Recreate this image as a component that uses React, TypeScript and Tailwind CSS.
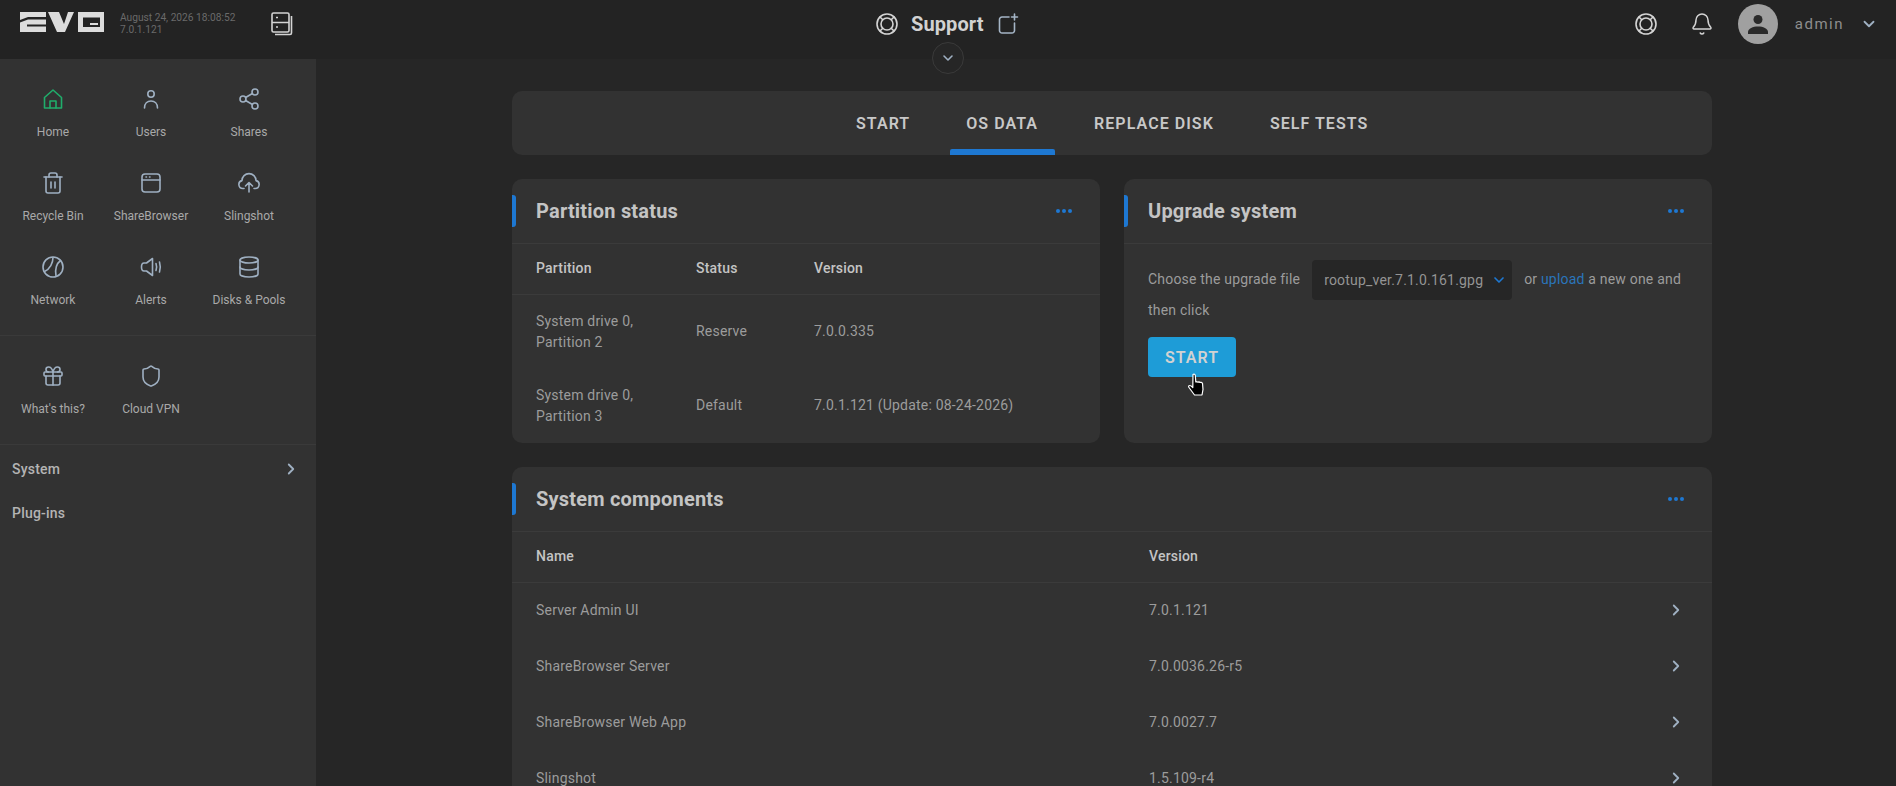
import { ReactNode } from 'react';
import { Bell, ChevronDown, ChevronRight, Database, Gift, Share2, Shield, Trash2 } from 'lucide-react';

const FONT = "font-['Roboto',sans-serif]";

function Icon({ children, size = 24, className = '' }: { children: ReactNode; size?: number; className?: string }) {
  return (
    <svg
      width={size}
      height={size}
      viewBox="0 0 24 24"
      fill="none"
      stroke="currentColor"
      strokeWidth={1.6}
      strokeLinecap="round"
      strokeLinejoin="round"
      className={className}
    >
      {children}
    </svg>
  );
}

function Lifebuoy({ size = 24, className = '' }: { size?: number; className?: string }) {
  return (
    <Icon size={size} className={className}>
      <circle cx="12" cy="12" r="10" />
      <circle cx="12" cy="12" r="6" />
      <path d="M5 5l2.800 2.800M19 5l-2.800 2.800M5 19l2.800-2.800M19 19l-2.800-2.800" />
    </Icon>
  );
}

function EvoLogo() {
  return (
    <svg width="84" height="20" viewBox="0 0 84 20" fill="#dcdcdc" className="mb-[4px]">
      <path d="M0 0h26v5H8L0 8z" />
      <path d="M0 10.500L8 7.500H26V12.500H7V14.500H26V20H0z" />
      <path d="M28 0h11l5 12 4-12h6l-9 20h-8z" />
      <path fillRule="evenodd" d="M58 0h26v20H58zM63 5.500V15h17V5.500z" />
      <path d="M70 11h8v2h-8z" />
    </svg>
  );
}

const mainItems = [
  {
    label: 'Home',
    active: true,
    icon: (
      <Icon>
        <path d="M3.500 21V10.500L12 3l8.500 7.500V21z" />
        <path d="M9 21v-7h6v7" />
      </Icon>
    ),
  },
  {
    label: 'Users',
    icon: (
      <Icon>
        <circle cx="12" cy="7" r="3.200" />
        <path d="M5.500 21c0-4.500 2.800-7 6.500-7s6.500 2.500 6.500 7" />
      </Icon>
    ),
  },
  { label: 'Shares', icon: <Share2 size={24} strokeWidth={1.6} /> },
  { label: 'Recycle Bin', icon: <Trash2 size={24} strokeWidth={1.6} /> },
  {
    label: 'ShareBrowser',
    icon: (
      <Icon>
        <rect x="3" y="3" width="18" height="18" rx="3" />
        <path d="M3 9h18M7 6h.5M10.500 6h.5" />
      </Icon>
    ),
  },
  {
    label: 'Slingshot',
    icon: (
      <Icon>
        <path d="M7 17.500H6a4 4 0 0 1-1-7.900 7 7 0 0 1 14 0 4 4 0 0 1-1 7.900h-1" />
        <path d="M12 21v-9M8.500 15l3.500-3.500 3.500 3.500" />
      </Icon>
    ),
  },
  {
    label: 'Network',
    icon: (
      <Icon>
        <circle cx="12" cy="12" r="10" />
        <path d="M12 2.500C12 8 9 14 3.500 16.500M19.500 5.500C15 9 14 15 15 21" />
      </Icon>
    ),
  },
  {
    label: 'Alerts',
    icon: (
      <Icon>
        <path d="M13.500 3.500L7.500 8H5C3.500 8 2.500 10 2.500 12s1 4 2.500 4h2.500l6 4.500z" />
        <path d="M17 8.500c.8 2.200.8 4.800 0 7M20.500 7c1 3.200 1 6.800 0 10" />
      </Icon>
    ),
  },
  { label: 'Disks & Pools', icon: <Database size={24} strokeWidth={1.6} /> },
];

const extraItems = [
  { label: "What's this?", icon: <Gift size={24} strokeWidth={1.6} /> },
  { label: 'Cloud VPN', icon: <Shield size={24} strokeWidth={1.6} /> },
];

type NavItem = { label: string; icon: ReactNode; active?: boolean };

function NavGrid({ items }: { items: NavItem[] }) {
  return (
    <div className="grid grid-cols-[98px_98px_98px] gap-y-[28px] pl-[4px]">
      {items.map((item) => (
        <div key={item.label} className="flex h-[56px] flex-col items-center">
          <div className={`flex h-[24px] items-center ${item.active ? 'text-[#20ad6b]' : 'text-[#9fb0c2]'}`}>
            {item.icon}
          </div>
          <span className="mt-[12px] whitespace-nowrap text-[12px] leading-[18px] text-[#a9a9a9]">{item.label}</span>
        </div>
      ))}
    </div>
  );
}

function Sidebar() {
  return (
    <aside className="h-full w-[316px] shrink-0 bg-[#323232]">
      <div className="border-b border-[#3a3a3a] pb-[24px] pt-[28px]">
        <NavGrid items={mainItems} />
      </div>
      <div className="h-[109px] border-b border-[#3a3a3a] pt-[28px]">
        <NavGrid items={extraItems} />
      </div>
      <div className="flex h-[48px] items-center justify-between pl-[12px] pr-[16px] text-[14px] font-medium tracking-[0.2px] text-[#b4b4b4]">
        <span>System</span>
        <ChevronRight size={18} strokeWidth={2.400} className="text-[#9fb0c2]" />
      </div>
      <div className="flex h-[40px] items-center pl-[12px] text-[14px] font-medium tracking-[0.2px] text-[#b4b4b4]">Plug-ins</div>
    </aside>
  );
}

function TopBar() {
  return (
    <header className="relative z-10 flex h-[59px] shrink-0 items-center bg-[#232323] pb-[11px]">
      <div className="flex w-[316px] shrink-0 items-center pl-[20px]">
        <EvoLogo />
        <div className="ml-[16px] w-[140px] text-[10.200px] leading-[12px] text-[#6a6a6a]">
          <div>August 24, 2026 18:08:52</div>
          <div>7.0.1.121</div>
        </div>
        <svg width="24" height="24" viewBox="0 0 24 24" fill="none" stroke="#d4d4d4" strokeWidth="1.600" className="ml-[11px]">
          <rect x="1" y="1" width="17" height="19" rx="1.500" />
          <path d="M1 10.500h17M5 5.500h2M5 15h2M20.500 4v17a1.500 1.500 0 0 1-1.500 1.500H4" />
        </svg>
      </div>
      <div className="ml-[559px] flex items-center">
        <Lifebuoy size={24} className="text-[#d4d4d4]" />
        <span className="ml-[12px] text-[20px] font-bold leading-[24px] tracking-[0.1px] text-[#d2d2d2]">Support</span>
        <Icon size={24} className="ml-[12px] text-[#a5b5c6]">
          <path d="M13 5H6A2.500 2.500 0 0 0 3.500 7.500v11A2.500 2.500 0 0 0 6 21h10a2.500 2.500 0 0 0 2.500-2.500V11" />
          <path d="M18.500 2v6M15.500 5h6" />
        </Icon>
      </div>
      <div className="ml-auto flex items-center pr-[18px]">
        <Lifebuoy size={24} className="text-[#d4d4d4]" />
        <Bell size={24} strokeWidth={1.5} className="ml-[32px] text-[#d4d4d4]" />
        <div className="ml-[24px] flex h-[40px] w-[40px] items-center justify-center rounded-full bg-[#a0a0a0]">
          <svg width="24" height="24" viewBox="0 0 24 24" fill="#2a2a2a">
            <circle cx="12" cy="7.500" r="4.500" />
            <path d="M2 22v-2c0-3.500 5-5.500 10-5.500s10 2 10 5.500v2z" />
          </svg>
        </div>
        <span className="ml-[17px] text-[15px] tracking-[1.500px] text-[#8e8e8e]">admin</span>
        <ChevronDown size={18} strokeWidth={2.400} className="ml-[16px] text-[#9fb0c2]" />
      </div>
      <div className="absolute left-[932px] top-[42px] flex h-[32px] w-[32px] items-center justify-center rounded-full border border-[#3a3a3a] bg-[#262626]">
        <ChevronDown size={16} strokeWidth={2.400} className="text-[#9fb0c2]" />
      </div>
    </header>
  );
}

function Tabs() {
  const tabs = [
    { label: 'START', cls: 'ml-[344px]' },
    { label: 'OS DATA', cls: 'ml-[56px]', active: true },
    { label: 'REPLACE DISK', cls: 'ml-[56px]' },
    { label: 'SELF TESTS', cls: 'ml-[56px]' },
  ];
  return (
    <div className="flex h-[64px] rounded-[10px] bg-[#323232]">
      {tabs.map((tab) => (
        <div key={tab.label} className={`relative flex h-full items-center pt-[2px] ${tab.cls}`}>
          <span className="whitespace-nowrap text-[16px] font-semibold tracking-[1.050px] text-[#c8c8c8]">{tab.label}</span>
          {tab.active && <div className="absolute -left-[16.500px] -right-[16.500px] bottom-0 h-[6px] rounded-t-[2px] bg-[#1e78d2]" />}
        </div>
      ))}
    </div>
  );
}

function Card({ title, className = '', children }: { title: string; className?: string; children: ReactNode }) {
  return (
    <section className={`relative rounded-[10px] bg-[#323232] ${className}`}>
      <div className="absolute left-0 top-[16px] h-[32px] w-[4px] rounded-r-[3px] bg-[#1e78d2]" />
      <div className="flex h-[65px] items-center justify-between border-b border-[#3b3b3b] pl-[24px] pr-[28px]">
        <h2 className="text-[20px] font-bold tracking-[0.2px] text-[#c4c4c4]">{title}</h2>
        <div className="flex gap-[2px]">
          <span className="h-[4px] w-[4px] rounded-full bg-[#1e78d2]" />
          <span className="h-[4px] w-[4px] rounded-full bg-[#1e78d2]" />
          <span className="h-[4px] w-[4px] rounded-full bg-[#1e78d2]" />
        </div>
      </div>
      {children}
    </section>
  );
}

function PartitionCard() {
  const rows = [
    { partition: ['System drive 0,', 'Partition 2'], status: 'Reserve', version: '7.0.0.335' },
    { partition: ['System drive 0,', 'Partition 3'], status: 'Default', version: '7.0.1.121 (Update: 08-24-2026)' },
  ];
  return (
    <Card title="Partition status" className="h-[264px] w-[588px]">
      <div className="grid h-[51px] grid-cols-[160px_118px_1fr] items-center border-b border-[#3b3b3b] pb-[2px] pl-[24px] text-[14px] font-medium tracking-[0.2px] text-[#c4c4c4]">
        <span>Partition</span>
        <span>Status</span>
        <span>Version</span>
      </div>
      {rows.map((row) => (
        <div key={row.version} className="grid h-[74px] grid-cols-[160px_118px_1fr] items-center pl-[24px] text-[14px] leading-[21px] tracking-[0.2px] text-[#9c9c9c]">
          <div>
            {row.partition.map((line) => (
              <div key={line}>{line}</div>
            ))}
          </div>
          <span className="-mt-[1px]">{row.status}</span>
          <span className="-mt-[1px]">{row.version}</span>
        </div>
      ))}
    </Card>
  );
}

function UpgradeCard() {
  return (
    <Card title="Upgrade system" className="h-[264px] w-[588px]">
      <div className="relative px-[24px] pt-[16px] text-[14px] leading-[21px] tracking-[0.2px] text-[#9c9c9c]">
        <div>
          Choose the upgrade file
          <span className="mx-[12px] inline-flex h-[40px] w-[200px] items-center justify-between rounded-[4px] bg-[#262626] pl-[12px] pr-[5px] align-middle text-[#949494]">
            <span>rootup_ver.7.1.0.161.gpg</span>
            <ChevronDown size={16} strokeWidth={2.500} className="text-[#1e78d2]" />
          </span>
          or <span className="text-[#2a75bb]">upload</span> a new one and then click
        </div>
        <button className="mt-[16px] block h-[40px] w-[88px] rounded-[4px] bg-[#1e9cd7] text-[16px] font-semibold tracking-[1px] text-[#d2d2d2]">
          START
        </button>
        <svg width="22" height="24" viewBox="0 0 20 24" className="absolute left-[62px] top-[129px]" fill="#000" stroke="#fff" strokeWidth="1.200" strokeLinejoin="round">
          <path d="M6 1.500c1-.8 2.200-.2 2.300 1L8.800 9l1-.3 1 .4 1.200-.2 1 .5 1.200-.1 1.300.9.500 6.300-1 5.500H7.500L2 14.500c-.8-1-.4-2 .8-2 .8 0 2 .9 3 2z" />
        </svg>
      </div>
    </Card>
  );
}

function ComponentsCard() {
  const rows = [
    ['Server Admin UI', '7.0.1.121'],
    ['ShareBrowser Server', '7.0.0036.26-r5'],
    ['ShareBrowser Web App', '7.0.0027.7'],
    ['Slingshot', '1.5.109-r4'],
    ['Slingshot Engine', '1.5.109'],
  ];
  return (
    <Card title="System components" className="w-[1200px]">
      <div className="grid h-[51px] grid-cols-[613px_1fr] items-center border-b border-[#3b3b3b] pb-[2px] pl-[24px] text-[14px] font-medium tracking-[0.2px] text-[#c4c4c4]">
        <span>Name</span>
        <span>Version</span>
      </div>
      {rows.map(([name, version]) => (
        <div key={name} className="grid h-[56px] grid-cols-[613px_1fr_auto] items-center pb-[2px] pl-[24px] pr-[27px] text-[14px] tracking-[0.2px] text-[#9c9c9c]">
          <span>{name}</span>
          <span>{version}</span>
          <ChevronRight size={18} strokeWidth={2.400} className="text-[#9fb0c2]" />
        </div>
      ))}
    </Card>
  );
}

export default function App() {
  return (
    <div className={`flex h-[786px] flex-col overflow-hidden bg-[#262626] ${FONT}`}>
      <TopBar />
      <div className="flex min-h-0 flex-1">
        <Sidebar />
        <main className="flex-1 pl-[196px] pt-[32px]">
          <div className="flex w-[1200px] flex-col gap-[24px]">
            <Tabs />
            <div className="flex gap-[24px]">
              <PartitionCard />
              <UpgradeCard />
            </div>
            <ComponentsCard />
          </div>
        </main>
      </div>
    </div>
  );
}
